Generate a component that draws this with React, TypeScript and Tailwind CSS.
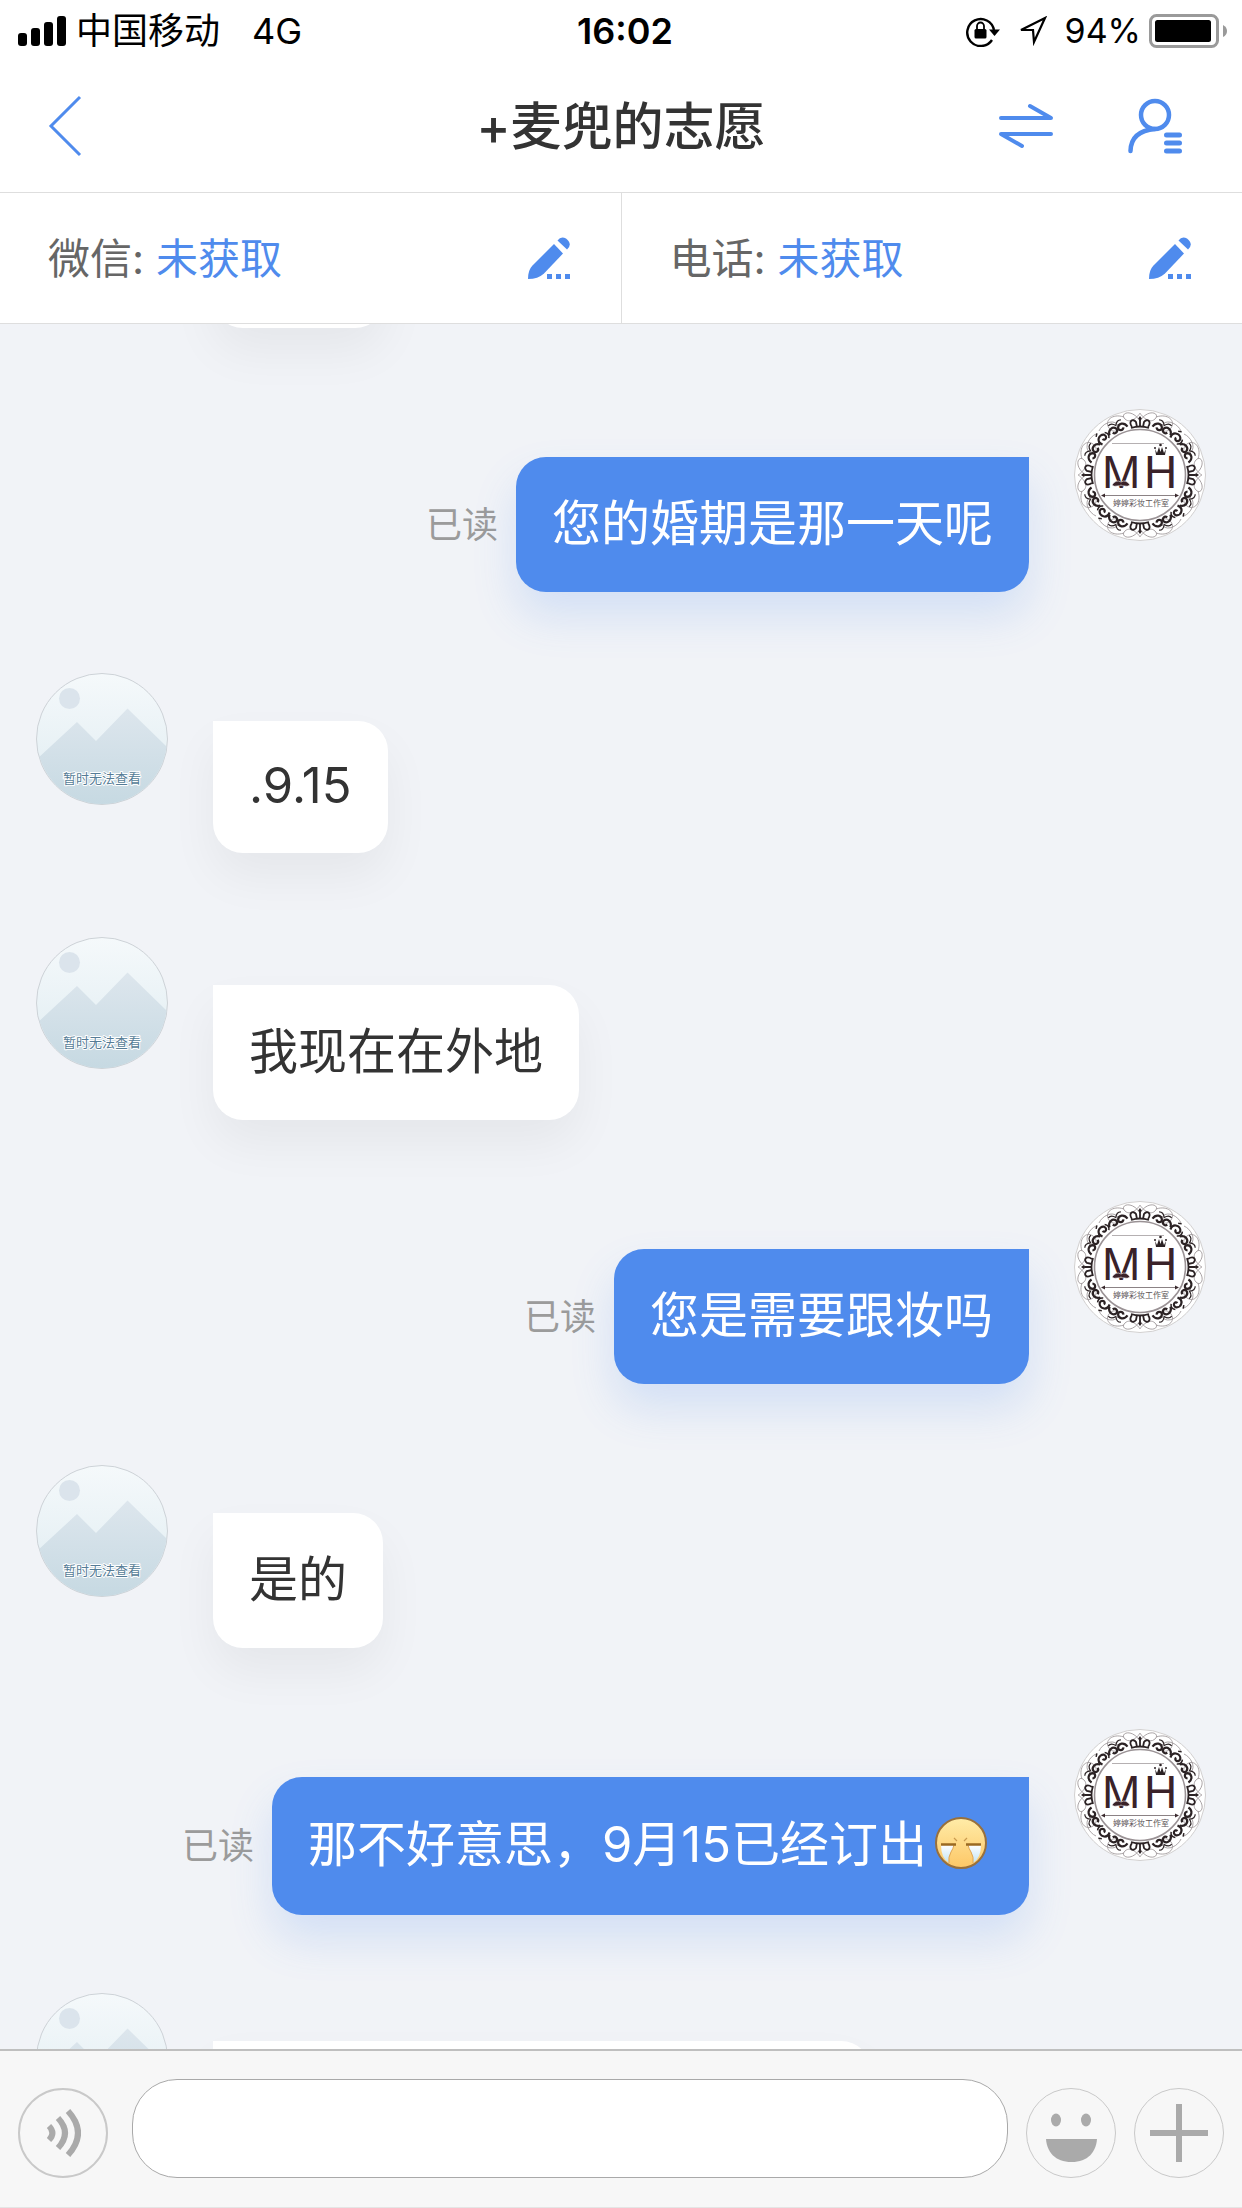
import React from "react";

const BLUE = "#4f8bed";

function Signal() {
  return (
    <svg width="48" height="30" viewBox="0 0 48 30" aria-hidden="true">
      <rect x="0" y="17" width="9" height="13" rx="3" />
      <rect x="13" y="12" width="9" height="18" rx="3" />
      <rect x="26" y="6" width="9" height="24" rx="3" />
      <rect x="39" y="0" width="9" height="30" rx="3" />
    </svg>
  );
}

function RotationLock() {
  return (
    <svg width="36" height="32" viewBox="0 0 36 32" fill="none" aria-hidden="true">
      <path d="M27 25A13.500 13.500 0 1 1 29 15" stroke="#000" strokeWidth="2.400" />
      <path d="M24 14.500H35L29.500 21z" fill="#000" />
      <rect x="9.500" y="14" width="12" height="9.500" rx="1.500" fill="#000" />
      <path d="M12 15v-4a3.500 3.500 0 0 1 7 0v4" stroke="#000" strokeWidth="1.800" />
    </svg>
  );
}

function LocationArrow() {
  return (
    <svg width="30" height="30" viewBox="0 0 30 30" fill="none" aria-hidden="true">
      <path d="M28 2 4 14h12l1 12z" stroke="#000" strokeWidth="2.200" />
    </svg>
  );
}

function Battery() {
  return (
    <svg width="78" height="34" viewBox="0 0 78 34" fill="none" aria-hidden="true">
      <rect x="1.500" y="1.500" width="67" height="31" rx="6" stroke="#9a9a9a" strokeWidth="3" />
      <rect x="6" y="6" width="56" height="22" rx="2.500" fill="#000" />
      <path d="M74 11q4 2 4 6t-4 6z" fill="#9a9a9a" />
    </svg>
  );
}

function Pencil() {
  return (
    <svg width="42" height="42" viewBox="0 0 42 42" fill={BLUE} aria-hidden="true">
      <path d="M26 7l9 9.500L16 36.500Q10 42 0 42 0 33 4.500 28.500z" />
      <path d="M29.500 3.500Q33-1.500 38 1.500 45 7 39 12.500z" />
      <path d="M19 37h5v5h-5zM28 37h5v5h-5zM37 37h5v5h-5z" />
    </svg>
  );
}

function CustomerAvatar({ caption = true }: { caption?: boolean }) {
  return (
    <svg className="size-33 shrink-0" viewBox="0 0 132 132" role="img" aria-label="客户头像">
      <defs>
        <linearGradient id="sky" x1="0" y1="0" x2="0" y2="1">
          <stop offset="0" stopColor="#f5f9fb" />
          <stop offset="1" stopColor="#dfecf1" />
        </linearGradient>
        <linearGradient id="hill" x1="0" y1="0" x2="0" y2="1">
          <stop offset="0" stopColor="#dde6ed" />
          <stop offset="1" stopColor="#c6d9e2" />
        </linearGradient>
        <clipPath id="disc">
          <circle cx="66" cy="66" r="65" />
        </clipPath>
      </defs>
      <circle cx="66" cy="66" r="65.500" fill="url(#sky)" stroke="#cdd2d7" />
      <g clipPath="url(#disc)">
        <circle cx="33.500" cy="25.500" r="10.500" fill="#dbe4ec" />
        <path d="M0 87 41 49l19 19 31.500-32.500L132 75v57H0z" fill="url(#hill)" />
      </g>
      {caption && (
        <text
          x="66"
          y="110"
          textAnchor="middle"
          fontSize="13"
          fill="#557c96"
          stroke="#fff"
          strokeWidth="2"
          strokeLinejoin="round"
          paintOrder="stroke"
        >
          暂时无法查看
        </text>
      )}
    </svg>
  );
}

const QUARTERS = [0, 90, 180, 270];

function StudioAvatar() {
  return (
    <svg className="size-33 shrink-0" viewBox="0 0 132 132" fill="none" role="img" aria-label="工作室头像">
      <circle cx="66" cy="66" r="65.500" fill="#fff" stroke="#d2d0d0" />
      {QUARTERS.map((q) => (
        <g key={q} transform={`rotate(${q} 66 66)`} stroke="#2b2224">
          <g stroke="#a09a9c" strokeWidth="0.900">
            <path d="M66 12C58-1 45 4 51 10s15-5 15-6c0 1 9 12 15 6S74-1 66 12" />
            <path d="M82 8c12-4 20 4 15 11s-13 1-8-4 15 0 18 7" />
            <path d="M124 50c4-12-4-20-11-15s-1 13 4 8 0-15-7-18" />
          </g>
          <g strokeWidth="1.800">
            <path d="M58 18c-4-6 1-9 4-5l1 5M74 18c4-6-1-9-4-5l-1 5M66 18V11" />
            <path d="M57 19q9-3 18 0" />
          </g>
          <path d="M66 7l1.800 2.500L66 12l-1.800-2.500z" fill="#2b2224" stroke="none" />
          {[26, 64].map((a) => (
            <g key={a} transform={`rotate(${a} 66 66)`}>
              <path d="M56 17c1-6 7-7 9-3 1 3-3 5-5 2" strokeWidth="2.200" />
              <path d="M76 17c-1-6-7-7-9-3-1 3 3 5 5 2" strokeWidth="2.200" />
              <path d="M59 8q4-2 7 3 3-5 7-3" strokeWidth="1.200" />
            </g>
          ))}
          <g transform="rotate(45 66 66)">
            <path d="M61 18c-3-7 5-10 8-6 2 4-4 6-4 2" strokeWidth="2.200" />
            <path d="M70 18q4-3 1-7M62 8l3-2" strokeWidth="1.500" />
          </g>
        </g>
      ))}
      <circle cx="66" cy="66" r="45.500" fill="#fff" stroke="#9a9295" strokeWidth="1.600" />
      <path d="M38 34.500h52" stroke="#b5b0b2" />
      <path d="M30 86.500h72" stroke="#8b8285" />
      <path d="M27 86.500l4-2v4zM105 86.500l-4-2v4z" fill="#3a2a2e" />
      <g fill="#3a2229" fontFamily="'Liberation Sans', sans-serif" fontSize="46">
        <text x="28" y="79">M</text>
        <text x="70" y="79">H</text>
      </g>
      <path d="M38 76q4-6 9-3 5-3 9 3-3 2-5 1-3 0-4-1-1 1-4 1-3 1-5-1z" fill="#3a2229" stroke="#fff" strokeWidth="0.600" />
      <path d="M81 40l2 4 2-6 1.500 5 1.500-5 2 6 2-4-1 6h-9z" fill="#2b2224" />
      <circle cx="81" cy="39" r="1" fill="#2b2224" />
      <circle cx="86.500" cy="36" r="1.300" fill="#2b2224" />
      <circle cx="92" cy="39" r="1" fill="#2b2224" />
      <text x="67" y="97" textAnchor="middle" fontSize="8" fill="#5d5558">
        婷婷彩妆工作室
      </text>
    </svg>
  );
}

function CryingEmoji() {
  return (
    <svg className="mb-3 ml-2 mr-1.5 inline-block size-13 align-middle" viewBox="0 0 52 52" role="img" aria-label="哭">
      <defs>
        <linearGradient id="face" x1="0" y1="0" x2="0" y2="1">
          <stop offset="0" stopColor="#ffeca8" />
          <stop offset="1" stopColor="#fdc766" />
        </linearGradient>
        <linearGradient id="tears" x1="0" y1="0" x2="0" y2="1">
          <stop offset="0" stopColor="#ffffff" />
          <stop offset="1" stopColor="#bfe3f5" />
        </linearGradient>
      </defs>
      <circle cx="26" cy="26" r="25" fill="url(#face)" stroke="#98703c" strokeWidth="2" />
      <path d="M6 28h13q-1 4-3 7-3 5-2 11Q6 41 6 28zM46 28H33q1 4 3 7 3 5 2 11 8-5 8-18z" fill="url(#tears)" />
      <path d="M19 28q-1 4-3 7-3 5-2 11M33 28q1 4 3 7 3 5 2 11" stroke="#e0a552" strokeWidth="1" fill="none" />
      <path d="M6 27.500h15M31 27.500h15" stroke="#9a6a22" strokeWidth="2.500" />
      <path d="M19 21l3 3M32 21l-3 3" stroke="#c99a50" strokeWidth="1.200" />
    </svg>
  );
}

type Message = { id: number; mine: boolean; leading: string; content: React.ReactNode };

const MESSAGES: Message[] = [
  { id: 1, mine: true, leading: "leading-[71px]", content: "您的婚期是那一天呢" },
  { id: 2, mine: false, leading: "leading-[68px]", content: ".9.15" },
  { id: 3, mine: false, leading: "leading-[71px]", content: "我现在在外地" },
  { id: 4, mine: true, leading: "leading-[71px]", content: "您是需要跟妆吗" },
  { id: 5, mine: false, leading: "leading-[71px]", content: "是的" },
  {
    id: 6,
    mine: true,
    leading: "leading-[74px]",
    content: (
      <>
        那不好意思，9月15已经订出
        <CryingEmoji />
      </>
    ),
  },
];

function MessageRow({ mine, leading, content }: Omit<Message, "id">) {
  if (mine) {
    return (
      <li className="flex h-66 items-start justify-end pr-9">
        <div className="mr-[45px] mt-12 flex items-center gap-[18px]">
          <span className="text-4xl text-[#9b9b9b]">已读</span>
          <p
            className={`rounded-b-[30px] rounded-tl-[30px] bg-[#4f8bed] px-9 pb-[33px] pt-[31px] text-[49px] text-white shadow-[0_24px_44px_rgba(79,139,237,0.18)] ${leading}`}
          >
            {content}
          </p>
        </div>
        <StudioAvatar />
      </li>
    );
  }
  return (
    <li className="flex h-66 items-start gap-[45px] pl-9">
      <CustomerAvatar />
      <p
        className={`mt-12 rounded-b-[30px] rounded-tr-[30px] bg-white px-9 pb-[33px] pt-[31px] text-[49px] text-[#333] shadow-[0_24px_48px_rgba(0,0,0,0.05)] ${leading}`}
      >
        {content}
      </p>
    </li>
  );
}

function ContactCell({ label }: { label: string }) {
  return (
    <div className="flex flex-1 items-center justify-between pl-12 pr-[51px] text-[42px]">
      <p>
        <span className="text-[#666]">{label}: </span>
        <span className="text-[#4f8bed]">未获取</span>
      </p>
      <button type="button" aria-label={`编辑${label}`}>
        <Pencil />
      </button>
    </div>
  );
}

export default function App() {
  return (
    <div className="flex h-screen flex-col overflow-hidden bg-[#f1f3f7] font-[Inter,'Noto_Sans_CJK_SC',sans-serif]">
      <header className="bg-white">
        <div className="grid h-[62px] grid-cols-[1fr_auto_1fr] items-center px-[15px] text-4xl text-black">
          <div className="flex items-center gap-[10px] pl-[3px]">
            <Signal />
            <span>中国移动</span>
            <span className="ml-[22px]">4G</span>
          </div>
          <time className="pl-2 font-semibold">16:02</time>
          <div className="flex items-center justify-end">
            <RotationLock />
            <span className="ml-4">
              <LocationArrow />
            </span>
            <span className="ml-[18px] mr-2 text-[34px]">94%</span>
            <Battery />
          </div>
        </div>
        <div className="grid h-[130px] grid-cols-[1fr_auto_1fr] items-center px-12 pb-[3px]">
          <button type="button" aria-label="返回" className="justify-self-start">
            <svg width="36" height="64" viewBox="0 0 36 64" fill="none" stroke={BLUE} strokeWidth="3">
              <path d="M32 3 3 32l29 29" />
            </svg>
          </button>
          <h1 className="pt-1 text-[51px] font-medium text-[#333]">+麦兜的志愿</h1>
          <div className="flex items-center gap-[72px] justify-self-end pr-3">
            <button type="button" aria-label="切换">
              <svg width="56" height="46" viewBox="0 0 56 46" fill="none" stroke={BLUE} strokeWidth="4" strokeLinecap="round" strokeLinejoin="round">
                <path d="M3 15h50L32 3M53 31H3l21 12" />
              </svg>
            </button>
            <button type="button" aria-label="客户资料">
              <svg width="56" height="56" viewBox="0 0 56 56" fill="none" stroke={BLUE} strokeWidth="4.500" strokeLinecap="round">
                <circle cx="29" cy="17" r="14" />
                <path d="M29 31Q5 33 4.500 53" />
                <path d="M40.500 37h13M40.500 45h13M40.500 53h13" strokeWidth="5" />
              </svg>
            </button>
          </div>
        </div>
        <div className="flex h-[132px] divide-x divide-[#dedede] border-y border-[#dedede]">
          <ContactCell label="微信" />
          <ContactCell label="电话" />
        </div>
      </header>

      <main className="min-h-0 flex-1 overflow-hidden">
        <ul>
          <li className="flex h-[85px] flex-col justify-end pl-[213px]">
            <div className="h-[216px] w-[172px] shrink-0">
              <div className="h-[135px] rounded-b-[30px] rounded-tr-[30px] bg-white shadow-[0_24px_48px_rgba(0,0,0,0.05)]" />
            </div>
          </li>
          {MESSAGES.map((m) => (
            <MessageRow key={m.id} mine={m.mine} leading={m.leading} content={m.content} />
          ))}
          <li className="flex items-start gap-[45px] pl-9">
            <CustomerAvatar caption={false} />
            <div className="mt-12 h-[135px] w-[658px] rounded-b-[30px] rounded-tr-[30px] bg-white shadow-[0_24px_48px_rgba(0,0,0,0.05)]" />
          </li>
        </ul>
      </main>

      <footer className="flex items-end gap-[18px] border-b border-t-2 border-b-[#e5e5e5] border-t-[#bfbfbf] bg-[#f7f7f7] px-[18px] pb-[29px] pt-7">
        <button type="button" aria-label="语音" className="mr-1.5 flex size-[90px] shrink-0 items-center justify-center rounded-full border-2 border-[#c9c9c9]">
          <svg width="36" height="48" viewBox="0 0 36 48" fill="none" stroke="#aaa" strokeWidth="6">
            <path d="M4 17q7 7 0 14M13 9q14 15 0 30M23 2q20 22 0 44" />
          </svg>
        </button>
        <input aria-label="输入消息" className="h-[99px] min-w-0 flex-1 rounded-[45px] border border-[#a9a9a9] bg-white px-9 text-[42px]" />
        <button type="button" aria-label="表情" className="flex size-[90px] shrink-0 items-center justify-center rounded-full border border-[#c9c9c9]">
          <svg width="90" height="90" viewBox="0 0 90 90" fill="#aaa" className="shrink-0">
            <ellipse cx="30" cy="32" rx="5" ry="6.500" />
            <ellipse cx="60" cy="32" rx="5" ry="6.500" />
            <path d="M20 51h51c-1 13-9 23-25.500 23S21 64 20 51z" />
          </svg>
        </button>
        <button type="button" aria-label="更多" className="flex size-[90px] shrink-0 items-center justify-center rounded-full border border-[#c9c9c9]">
          <svg width="58" height="58" viewBox="0 0 58 58" stroke="#aaa" strokeWidth="6">
            <path d="M0 29h58M29 0v58" />
          </svg>
        </button>
      </footer>
    </div>
  );
}
